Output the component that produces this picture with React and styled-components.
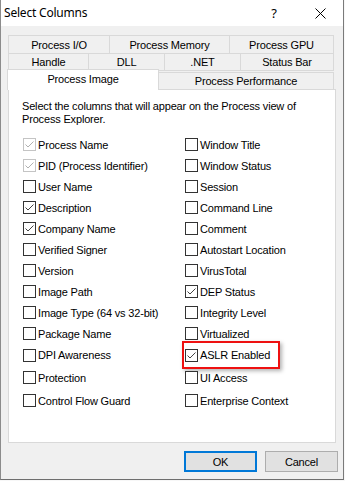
import React from "react";
import styled, { createGlobalStyle } from "styled-components";

const Global = createGlobalStyle`
  html, body { margin: 0; padding: 0; background: #f7f7f7; }
  body { font-family: "Liberation Sans", Arial, sans-serif; font-size: 11px; letter-spacing: -0.17px; color: #000; }
  #root { width: 345px; height: 481px; overflow: hidden; }
`;

const Window = styled.div`
  width: 344px;
  height: 480px;
  box-sizing: border-box;
  border-left: 1px solid #8c8c8c;
  border-right: 1px solid #7a7a7a;
  border-bottom: 1px solid #6e6e6e;
  background: #f0f0f0;
  display: flex;
  flex-direction: column;
`;

const TitleBar = styled.div`
  height: 26px;
  background: #fff;
  display: flex;
  align-items: center;
  padding-left: 3px;
`;

const Title = styled.div`
  flex: 1;
  font-family: "Noto Sans", "Open Sans", sans-serif;
  font-size: 12px;
  letter-spacing: -0.2px;
  color: #000;
  padding-bottom: 1px;
`;

const CaptionButton = styled.div`
  width: 46px;
  height: 26px;
  display: flex;
  align-items: center;
  justify-content: center;
  font-family: "Noto Sans", "Open Sans", sans-serif;
  font-size: 13px;
  letter-spacing: 0;
  color: #000;
`;

const Body = styled.div`
  flex: 1;
  padding: 9px 0 0 7px;
  display: flex;
  flex-direction: column;
`;

const TabRow = styled.div`
  display: flex;
  height: ${(p) => p.$h}px;
  margin-top: ${(p) => p.$mt || 0}px;
  align-items: flex-end;
`;

const Tab = styled.div`
  box-sizing: border-box;
  width: ${(p) => p.$w}px;
  height: ${(p) => p.$h}px;
  margin-left: ${(p) => (p.$first ? 0 : -1)}px;
  border: 1px solid #d9d9d9;
  ${(p) => (p.$open ? "border-bottom: none;" : "")}
  background: #f0f0f0;
  display: flex;
  align-items: center;
  justify-content: center;
  white-space: nowrap;
`;

const ActiveTab = styled.div`
  position: relative;
  z-index: 2;
  box-sizing: border-box;
  width: 152px;
  height: 21px;
  margin-left: -1px;
  margin-bottom: -1px;
  border: 1px solid #d9d9d9;
  border-bottom: none;
  background: #fff;
  display: flex;
  align-items: center;
  justify-content: center;
  padding-bottom: 2px;
`;

const Panel = styled.div`
  box-sizing: border-box;
  width: 328px;
  height: 354px;
  border: 1px solid #d9d9d9;
  background: #fff;
  padding: 10px 0 0 13px;
`;

const Intro = styled.p`
  margin: 0;
  line-height: 13px;
  white-space: nowrap;
`;

const Grid = styled.div`
  margin-top: 8px;
  padding-left: 1px;
  display: grid;
  grid-template-columns: 162px 1fr;
  grid-template-rows: repeat(10, 21px) 22px 23px 23px;
  grid-auto-flow: column;
`;

const Item = styled.label`
  position: relative;
  display: flex;
  align-items: center;
  gap: 2px;
  white-space: nowrap;
`;

const Box = styled.span`
  box-sizing: border-box;
  width: 13px;
  height: 13px;
  flex: none;
  border: 1px solid ${(p) => (p.$disabled ? "#c4c4c4" : "#333")};
  background: #fff;
  display: flex;
  align-items: center;
  justify-content: center;
`;

const Highlight = styled.span`
  position: absolute;
  left: -3px;
  top: -3px;
  width: 98px;
  height: 28px;
  box-sizing: border-box;
  border: 2px solid #ee1111;
  box-shadow: 2px 2px 4px rgba(0, 0, 0, 0.3);
  pointer-events: none;
`;

const ButtonRow = styled.div`
  display: flex;
  justify-content: flex-end;
  gap: 8px;
  padding: 8px 5px 0 0;
`;

const Button = styled.div`
  box-sizing: border-box;
  width: 73px;
  height: 21px;
  background: #e1e1e1;
  border: ${(p) => (p.$primary ? "2px solid #0078d7" : "1px solid #adadad")};
  display: flex;
  align-items: center;
  justify-content: center;
`;

const Check = ({ color }) => (
  <svg width="11" height="11" viewBox="0 0 11 11">
    <polyline points="1.5,5.5 4,8 9.5,2.5" fill="none" stroke={color} strokeWidth="1" />
  </svg>
);

const Checkbox = ({ label, checked, disabled, highlight }) => (
  <Item>
    <Box $disabled={disabled}>{checked && <Check color={disabled ? "#b0b0b0" : "#444"} />}</Box>
    <span>{label}</span>
    {highlight && <Highlight />}
  </Item>
);

const left = [
  { label: "Process Name", checked: true, disabled: true },
  { label: "PID (Process Identifier)", checked: true, disabled: true },
  { label: "User Name" },
  { label: "Description", checked: true },
  { label: "Company Name", checked: true },
  { label: "Verified Signer" },
  { label: "Version" },
  { label: "Image Path" },
  { label: "Image Type (64 vs 32-bit)" },
  { label: "Package Name" },
  { label: "DPI Awareness" },
  { label: "Protection" },
  { label: "Control Flow Guard" },
];

const right = [
  { label: "Window Title" },
  { label: "Window Status" },
  { label: "Session" },
  { label: "Command Line" },
  { label: "Comment" },
  { label: "Autostart Location" },
  { label: "VirusTotal" },
  { label: "DEP Status", checked: true },
  { label: "Integrity Level" },
  { label: "Virtualized" },
  { label: "ASLR Enabled", checked: true, highlight: true },
  { label: "UI Access" },
  { label: "Enterprise Context" },
];

export default function App() {
  return (
    <>
      <Global />
      <Window>
        <TitleBar>
          <Title>Select Columns</Title>
          <CaptionButton>?</CaptionButton>
          <CaptionButton>
            <svg width="11" height="11" viewBox="0 0 11 11">
              <path d="M0.5 0.5 L10.5 10.5 M10.5 0.5 L0.5 10.5" stroke="#000" strokeWidth="1" />
            </svg>
          </CaptionButton>
        </TitleBar>
        <Body>
          <TabRow $h={19}>
            <Tab $first $w={102} $h={19}>Process I/O</Tab>
            <Tab $w={121} $h={19}>Process Memory</Tab>
            <Tab $w={105} $h={19}>Process GPU</Tab>
          </TabRow>
          <TabRow $h={18} $mt={-1}>
            <Tab $first $w={81} $h={18}>Handle</Tab>
            <Tab $w={77} $h={18}>DLL</Tab>
            <Tab $w={77} $h={18}>.NET</Tab>
            <Tab $w={94} $h={18}>Status Bar</Tab>
          </TabRow>
          <TabRow $h={18}>
            <ActiveTab>Process Image</ActiveTab>
            <Tab $w={176} $h={17} $open>Process Performance</Tab>
          </TabRow>
          <Panel>
            <Intro>
              Select the columns that will appear on the Process view of
              <br />
              Process Explorer.
            </Intro>
            <Grid>
              {left.map((c) => (
                <Checkbox key={c.label} {...c} />
              ))}
              {right.map((c) => (
                <Checkbox key={c.label} {...c} />
              ))}
            </Grid>
          </Panel>
          <ButtonRow>
            <Button $primary>OK</Button>
            <Button>Cancel</Button>
          </ButtonRow>
        </Body>
      </Window>
    </>
  );
}
